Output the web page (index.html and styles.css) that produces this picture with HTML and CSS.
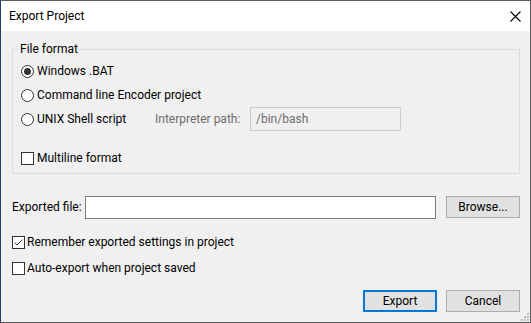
FILE: index.html
```html
<!DOCTYPE html>
<html lang="en">
<head>
    <meta charset="UTF-8">
    <title>Export Project</title>
    <link rel="stylesheet" href="styles.css">
</head>
<body>
    <div class="window">
        <div class="titlebar">
            <span class="title">Export Project</span>
            <svg class="close" width="11" height="11" viewBox="0 0 11 11">
                <path d="M0.5 0.5 L10.5 10.5 M10.5 0.5 L0.5 10.5" stroke="#000" stroke-width="1.1" fill="none"/>
            </svg>
        </div>

        <div class="content">
            <fieldset class="group">
                <legend>File format</legend>

                <div class="opt">
                    <span class="radio checked"></span>
                    <span>Windows .BAT</span>
                </div>
                <div class="opt">
                    <span class="radio"></span>
                    <span>Command line Encoder project</span>
                </div>
                <div class="opt">
                    <span class="radio"></span>
                    <span class="unix-label">UNIX Shell script</span>
                    <span class="disabled-label">Interpreter path:</span>
                    <span class="input disabled">/bin/bash</span>
                </div>
                <div class="opt multiline">
                    <span class="check"></span>
                    <span>Multiline format</span>
                </div>
            </fieldset>

            <div class="file-row">
                <span class="file-label">Exported file:</span>
                <span class="input file-input"></span>
                <button class="btn browse">Browse...</button>
            </div>

            <div class="opt check-row first">
                <span class="check">
                    <svg width="11" height="11" viewBox="0 0 11 11">
                        <path d="M1.5 5.5 L4 8 L9.5 2.5" stroke="#333" stroke-width="1" fill="none"/>
                    </svg>
                </span>
                <span>Remember exported settings in project</span>
            </div>
            <div class="opt check-row">
                <span class="check"></span>
                <span>Auto-export when project saved</span>
            </div>

            <div class="buttons">
                <button class="btn default">Export</button>
                <button class="btn">Cancel</button>
            </div>
        </div>

        <svg class="grip" width="10" height="10" viewBox="0 0 10 10">
            <rect x="8" y="2" width="2" height="2" fill="#bcbcbc"/>
            <rect x="5" y="5" width="2" height="2" fill="#bcbcbc"/>
            <rect x="8" y="5" width="2" height="2" fill="#bcbcbc"/>
            <rect x="2" y="8" width="2" height="2" fill="#bcbcbc"/>
            <rect x="5" y="8" width="2" height="2" fill="#bcbcbc"/>
            <rect x="8" y="8" width="2" height="2" fill="#bcbcbc"/>
        </svg>
    </div>
</body>
</html>
```
FILE: styles.css
```css
body, html {
    margin: 0;
    padding: 0;
    font-family: Roboto, "Liberation Sans", sans-serif;
    font-size: 12px;
    color: #000;
}

.window {
    position: relative;
    width: 531px;
    height: 323px;
    box-sizing: border-box;
    border: 1px solid #5a5a5a;
    border-left-color: #2b3a70;
    display: flex;
    flex-direction: column;
}

.titlebar {
    height: 30px;
    flex-shrink: 0;
    background-color: #fff;
    display: flex;
    align-items: center;
    padding: 0 9px 0 8px;
}

.title {
    line-height: 16px;
}

.close {
    margin-left: auto;
}

.content {
    flex: 1;
    background-color: #f0f0f0;
    padding: 10px 10px 10px 11px;
    display: flex;
    flex-direction: column;
}

.group {
    margin: 0;
    padding: 2px 0 3px 0;
    border: 1px solid #dcdcdc;
    min-width: 0;
}

.group legend {
    margin-left: 5px;
    padding: 0 2px;
    line-height: 16px;
}

.opt {
    display: flex;
    align-items: center;
    height: 24px;
    gap: 3px;
    line-height: 16px;
}

.group .opt {
    margin-left: 8px;
}

.group .multiline {
    margin-top: 15px;
}

.radio {
    width: 13px;
    height: 13px;
    box-sizing: border-box;
    border: 1px solid #333;
    border-radius: 50%;
    background-color: #fff;
    display: flex;
    align-items: center;
    justify-content: center;
    flex-shrink: 0;
}

.radio.checked::after {
    content: '';
    width: 7px;
    height: 7px;
    border-radius: 50%;
    background-color: #333;
}

.check {
    width: 13px;
    height: 13px;
    box-sizing: border-box;
    border: 1px solid #333;
    background-color: #fff;
    flex-shrink: 0;
    display: flex;
}

.unix-label {
    width: 115px;
}

.disabled-label {
    width: 92px;
    color: #6d6d6d;
}

.input {
    box-sizing: border-box;
    border: 1px solid #7a7a7a;
    background-color: #fff;
    display: flex;
    align-items: center;
    padding: 0 5px;
}

.input.disabled {
    width: 151px;
    height: 24px;
    border-color: #cccccc;
    background-color: #f0f0f0;
    color: #6d6d6d;
}

.file-row {
    display: flex;
    align-items: center;
    height: 24px;
    margin-top: 21px;
}

.file-label {
    width: 73px;
}

.file-input {
    width: 351px;
    height: 23px;
}

.btn {
    width: 74px;
    height: 22px;
    box-sizing: border-box;
    border: 1px solid #adadad;
    background-color: #e1e1e1;
    font: inherit;
    color: #000;
    padding: 0;
}

.browse {
    margin-left: 10px;
}

.check-row {
    height: 26px;
    gap: 2px;
}

.check-row.first {
    margin-top: 10px;
}

.buttons {
    display: flex;
    justify-content: flex-end;
    gap: 9px;
    margin-top: auto;
}

.btn.default {
    border: 2px solid #0078d7;
}

.grip {
    position: absolute;
    right: 1px;
    bottom: 1px;
}
```
